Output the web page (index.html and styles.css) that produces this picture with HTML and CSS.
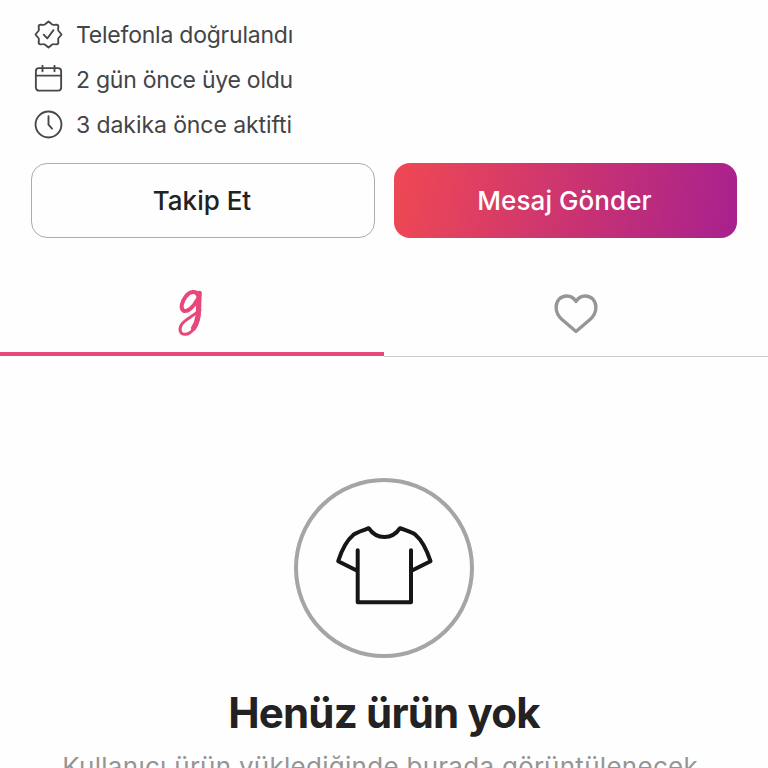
FILE: index.html
```html
<!DOCTYPE html>
<html lang="tr">
<head>
<meta charset="utf-8">
<title>Profil</title>
<link rel="stylesheet" href="styles.css">
</head>
<body>
<main class="profile">
  <ul class="facts">
    <li class="fact">
      <svg class="fact-icon" viewBox="0 0 28 28"><path d="M14 1.4L17.6 4.4Q18.2 4.8 19 4.7L21.8 4.5Q23.5 4.5 23.5 6.2L23.3 9Q23.2 9.8 23.6 10.4L26.6 14L23.6 17.6Q23.2 18.2 23.3 19L23.5 21.8Q23.5 23.5 21.8 23.5L19 23.3Q18.2 23.2 17.6 23.6L14 26.6L10.4 23.6Q9.8 23.2 9 23.3L6.2 23.5Q4.5 23.5 4.5 21.8L4.7 19Q4.8 18.2 4.4 17.6L1.4 14L4.4 10.4Q4.8 9.8 4.7 9L4.5 6.2Q4.5 4.5 6.2 4.5L9 4.7Q9.8 4.8 10.4 4.4Z"/><path d="M9.4 14.2L12.8 17.8L18.8 9.8"/></svg>
      <span class="fact-text verified">Telefonla doğrulandı</span>
    </li>
    <li class="fact">
      <svg class="fact-icon" viewBox="0 0 28 28"><rect x="1.8" y="3" width="24.4" height="21.8" rx="3"/><path d="M1.8 10.2H26.2M8.2 .8V6M19.8 .8V6"/></svg>
      <span class="fact-text joined">2 gün önce üye oldu</span>
    </li>
    <li class="fact">
      <svg class="fact-icon" viewBox="0 0 28 28"><circle cx="14" cy="14" r="12.5"/><path d="M14 6V14.2L17.4 18"/></svg>
      <span class="fact-text active">3 dakika önce aktifti</span>
    </li>
  </ul>
  <div class="actions">
    <button class="btn follow"><span>Takip Et</span></button>
    <button class="btn message"><span>Mesaj Gönder</span></button>
  </div>
  <nav class="tabs">
    <a class="tab selected"><svg class="brand" viewBox="0 0 30 50"><path d="M21.8 7C20 2.6 14 3.2 9.8 8.4C5.4 14 4.4 20.4 7.2 22.4C11 24.6 17.4 19.6 21.2 12" stroke-width="4"/><path d="M23.8 4.8C23.2 12 23.8 20 22.8 28C21.4 38 15.6 46 9 46.3C4 46.5 2.8 41.5 5.4 36.8C8.6 31.2 17 28.6 24 22" stroke-width="3"/><path d="M23.2 5.4C22.6 12 23 20 22 28C21.4 32.5 19.8 36.8 17.6 40" stroke-width="5.2"/></svg></a>
    <a class="tab"><svg class="heart" viewBox="0 0 44 40"><path d="M22 37.6L8 25.5C4 21.8 2.1 18 2.1 13.4C2.1 6.8 6.6 2 12.8 2C16.8 2 19.9 4 22 7.5C24.1 4 27.2 2 31.2 2C37.4 2 41.9 6.8 41.9 13.4C41.9 18 40 21.8 36 25.5Z"/></svg></a>
  </nav>
  <section class="empty">
    <div class="empty-icon"><svg viewBox="0 0 100 84"><path d="M22.7 27.3V79.3H76V27.3M22.7 48L3.2 38.2C6.5 27.5 11.5 17.5 18.5 11.7C22.7 8.6 28.5 7.5 33.7 5.2C41.5 17 57.2 17 65 5.2C70.5 7.5 76 8.6 80.4 11.7C87.3 17.5 92 27.5 95.5 38.2L76 48"/></svg></div>
    <h1>Henüz ürün yok</h1>
    <p>Kullanıcı ürün yüklediğinde burada görüntülenecek.</p>
  </section>
</main>
</body>
</html>
```
FILE: styles.css
```css
* { box-sizing: border-box; }
body { margin: 0; background: #fefefe; font-family: Inter, "Liberation Sans", sans-serif; overflow: hidden; }
.profile { height: 768px; overflow: hidden; }
.facts { list-style: none; margin: 0; padding: 12px 0 0 34px; }
.fact { display: flex; align-items: center; gap: 13px; height: 45px; }
.fact-icon { width: 29px; height: 29px; fill: none; stroke: #47474a; stroke-width: 1.8; stroke-linecap: round; stroke-linejoin: round; }
.fact-text { font-size: 23px; line-height: 30px; color: #444447; white-space: nowrap; }
.verified { letter-spacing: -0.23px; }
.joined { letter-spacing: -0.25px; }
.active { letter-spacing: -0.08px; }
.actions { display: grid; grid-template-columns: 344px 343px; gap: 19px; padding: 16px 31px 0; }
.btn { height: 75px; border: 0; border-radius: 16px; padding: 0 2px 0 0; font: 500 26px/32px Inter, sans-serif; }
.follow { background: #fefefe; border: 1.5px solid #acacac; color: #222; }
.message { background: linear-gradient(100deg, #ed4755 4%, #a9218d 98%); color: #fff; letter-spacing: 0.08px; }
.tabs { display: grid; grid-template-columns: 1fr 1fr; height: 119px; }
.tab { display: flex; justify-content: center; align-items: flex-start; padding-top: 56px; border-bottom: 1px solid #cbcbcb; }
.selected { height: 118px; padding-top: 50px; border-bottom: 4px solid #e84879; }
.brand { width: 30px; height: 50px; margin-right: 3px; fill: none; stroke: #e84879; stroke-linecap: round; stroke-linejoin: round; }
.heart { width: 44px; height: 40px; fill: none; stroke: #969696; stroke-width: 3.3; stroke-linejoin: round; }
.empty { display: flex; flex-direction: column; align-items: center; padding-top: 121px; }
.empty-icon { width: 180px; height: 180px; border: 4px solid #a5a5a5; border-radius: 50%; display: flex; justify-content: center; padding: 41px 0 0 1px; }
.empty-icon svg { width: 100px; height: 84px; fill: none; stroke: #161616; stroke-width: 4; stroke-linecap: round; stroke-linejoin: round; }
h1 { margin: 30px 0 0; font-size: 42px; line-height: 50px; font-weight: 700; letter-spacing: -0.8px; color: #222; white-space: nowrap; }
p { margin: 12px 0 0; font-size: 26px; line-height: 34px; letter-spacing: 0.28px; color: #959595; white-space: nowrap; }
```
